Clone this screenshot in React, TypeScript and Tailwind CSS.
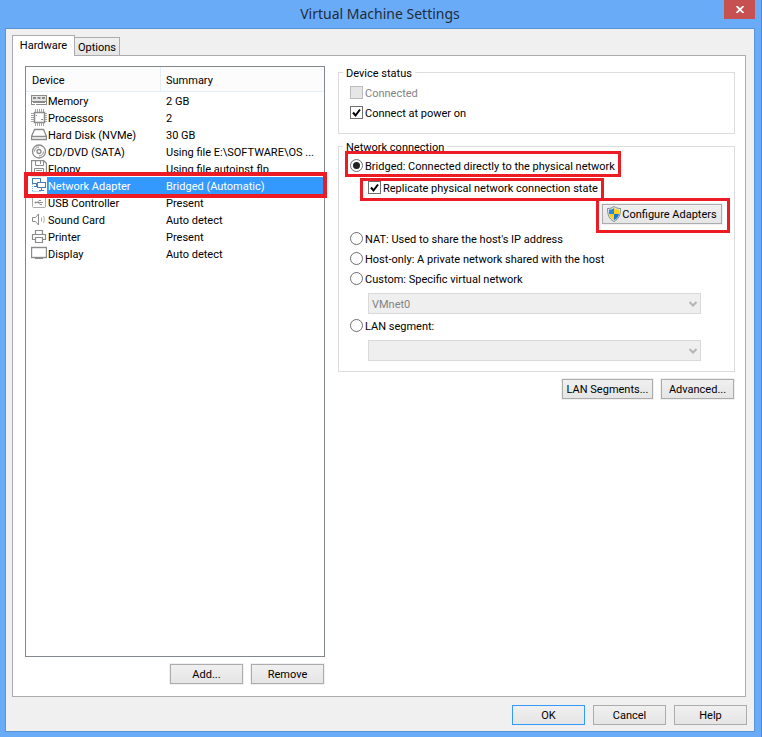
import React, { useState } from 'react';
import clsx from 'clsx';

interface Device {
  name: string;
  summary: string;
  icon: React.ReactNode;
}

const DEVICES: Device[] = [
  {
    name: 'Memory',
    summary: '2 GB',
    icon: (
      <>
        <rect x="0.5" y="3.5" width="15" height="6" fill="#e4e4e4" />
        <path d="M2 5h3v2H2zM6.500 5h3v2h-3zM11 5h3v2h-3z" fill="#888" stroke="none" />
        <path d="M0 12.500h4M5 12.500h11M0.500 9v3M15.500 9v3M2 10.500h12" />
      </>
    ),
  },
  {
    name: 'Processors',
    summary: '2',
    icon: (
      <>
        <rect x="3.5" y="3.5" width="10" height="10" strokeWidth="1.500" />
        <path d="M4.500 0v3M6.500 0v3M8.500 0v3M10.500 0v3M12.500 0v3M4.500 14v3M6.500 14v3M8.500 14v3M10.500 14v3M12.500 14v3M0 4.500h3M0 6.500h3M0 8.500h3M0 10.500h3M0 12.500h3M14 4.500h2M14 6.500h2M14 8.500h2M14 10.500h2M14 12.500h2" stroke="#a5a5a5" />
        <path d="M5 6.500h1M10 10.500h2" />
      </>
    ),
  },
  {
    name: 'Hard Disk (NVMe)',
    summary: '30 GB',
    icon: <path d="M3.500 3.500h9l3 7v3H0.500v-3zM0.500 10.500h15" strokeWidth="1.300" />,
  },
  {
    name: 'CD/DVD (SATA)',
    summary: 'Using file E:\\SOFTWARE\\OS ...',
    icon: (
      <>
        <circle cx="8" cy="8.500" r="6.500" strokeWidth="1.300" />
        <circle cx="8" cy="8.500" r="2" strokeWidth="1.300" />
        <path d="M3.500 8.500A4.500 4.500 0 0 1 8 4M12.500 8.500A4.500 4.500 0 0 1 8 13" />
      </>
    ),
  },
  {
    name: 'Floppy',
    summary: 'Using file autoinst.flp',
    icon: (
      <>
        <path d="M0.500 0.500h12l3 3v12H0.500z" strokeWidth="1.300" />
        <path d="M4.500 0.500v5h8v-5M9.500 1v3M3.500 15.500v-7h9v7M5 10.500h6M5 12.500h6" />
      </>
    ),
  },
  {
    name: 'Network Adapter',
    summary: 'Bridged (Automatic)',
    icon: (
      <>
        <path d="M1.500 7v7.500M1.500 14.500H10" stroke="#7cb4ee" strokeDasharray="1 1" />
        <rect x="1.500" y="1.500" width="8" height="5" fill="#fff" stroke="#4b7fb8" />
        <path d="M5.500 7v2M3 9.500h3" stroke="#4b7fb8" />
        <rect x="6.500" y="5.500" width="8" height="5" fill="#fff" stroke="#4b7fb8" />
        <path d="M10.500 11v2M8 13.500h5" stroke="#4b7fb8" />
      </>
    ),
  },
  {
    name: 'USB Controller',
    summary: 'Present',
    icon: (
      <>
        <rect x="1.500" y="2.500" width="13" height="11" rx="1" stroke="#aaa" />
        <path d="M4 8.500h8M6 8.500l2-2h2M7 8.500l2 2h2" />
        <circle cx="4.500" cy="8.500" r="1" fill="#8b8b8b" stroke="none" />
      </>
    ),
  },
  {
    name: 'Sound Card',
    summary: 'Auto detect',
    icon: (
      <>
        <path d="M1.500 6.500h3l3-3.500v11l-3-3.500h-3z" />
        <path d="M10.500 6.500v4M12.500 5c1 2 1 5 0 7" stroke="#aaa" />
      </>
    ),
  },
  {
    name: 'Printer',
    summary: 'Present',
    icon: (
      <path d="M4.500 6.500v-4h7v4M4.500 11.500h-3v-5h13v5h-3M4.500 9.500h7v5h-7z" strokeWidth="1.200" />
    ),
  },
  {
    name: 'Display',
    summary: 'Auto detect',
    icon: (
      <>
        <rect x="0.500" y="2.500" width="15" height="10" strokeWidth="1.400" />
        <path d="M4 13.500h8" />
      </>
    ),
  },
];

const NETWORK_MODES = [
  { id: 'nat', label: "NAT: Used to share the host's IP address" },
  { id: 'hostonly', label: 'Host-only: A private network shared with the host' },
  { id: 'custom', label: 'Custom: Specific virtual network' },
];

const Highlight = ({ className }: { className: string }) => (
  <span className={clsx('pointer-events-none absolute z-10 border-[#ed1c24]', className)} />
);

interface PushButtonProps {
  children: React.ReactNode;
  className?: string;
  primary?: boolean;
}

const PushButton = ({ children, className = 'w-[73px]', primary }: PushButtonProps) => (
  <button
    type="button"
    className={clsx(
      'flex h-5 shrink-0 items-center justify-center border bg-linear-to-b from-[#f0f0f0] to-[#e5e5e5] whitespace-nowrap',
      primary ? 'border-[#3399ff]' : 'border-[#acacac] shadow-[0_0_0_1px_#f0f0f0]',
      className
    )}
  >
    {children}
  </button>
);

interface CheckProps {
  label: string;
  defaultChecked?: boolean;
  disabled?: boolean;
}

const Check = ({ label, defaultChecked, disabled }: CheckProps) => (
  <label className={clsx('flex h-5 items-center gap-0.5', disabled && 'text-[#838383]')}>
    <span className="relative mb-px flex">
      <input
        type="checkbox"
        defaultChecked={defaultChecked}
        disabled={disabled}
        className="peer size-[13px] appearance-none border border-[#707070] bg-white disabled:border-[#bcbcbc] disabled:bg-[#e6e6e6]"
      />
      <svg viewBox="0 0 13 13" className="pointer-events-none absolute inset-0 hidden size-[13px] peer-checked:block">
        <path d="M3 6.500l2.500 3L10 3.500" fill="none" stroke="#000" strokeWidth="2" />
      </svg>
    </span>
    <span className="pt-0.5">{label}</span>
  </label>
);

interface RadioProps {
  label: string;
  checked: boolean;
  onChange: () => void;
}

const Radio = ({ label, checked, onChange }: RadioProps) => (
  <label className="flex h-5 items-center gap-0.5">
    <span className="relative mb-px flex">
      <input
        type="radio"
        name="network"
        checked={checked}
        onChange={onChange}
        className="peer size-[13px] appearance-none rounded-full border border-[#707070] bg-white"
      />
      <span className="pointer-events-none absolute inset-[3px] hidden rounded-full bg-[#222] peer-checked:block" />
    </span>
    <span className="pt-0.5">{label}</span>
  </label>
);

const DisabledSelect = ({ label, value }: { label: string; value: string }) => (
  <div className="relative mr-[33px] ml-[29px]">
    <select
      aria-label={label}
      disabled
      className="block h-[21px] w-full appearance-none border border-[#d9d9d9] bg-[#efefef] px-[3px] pt-0.5 text-[#838383] opacity-100"
    >
      <option>{value}</option>
    </select>
    <svg viewBox="0 0 8 6" className="pointer-events-none absolute top-2 right-1 h-1.5 w-2">
      <path d="M0.500 1L4 4.500 7.500 1" fill="none" stroke="#b5b5b5" strokeWidth="2" />
    </svg>
  </div>
);

const Shield = () => (
  <svg viewBox="0 0 14 16" className="h-4 w-3.5">
    <path d="M7 0.500C5 2 3 2.500 0.500 2.500c0 6 1.500 10.500 6.500 13 5-2.500 6.500-7 6.500-13C11 2.500 9 2 7 0.500z" fill="#e8eef2" stroke="#7d8b94" />
    <path d="M7 2C5.500 3 4 3.500 2 3.600V8h5z" fill="#2e86d8" />
    <path d="M7 2c1.500 1 3 1.500 5 1.600V8H7z" fill="#fbd21f" />
    <path d="M2 8h5v6.300C4 12.700 2.400 10.500 2 8z" fill="#fbd21f" />
    <path d="M12 8H7v6.300c3-1.600 4.600-3.800 5-6.300z" fill="#1f74cb" />
  </svg>
);

const DeviceTable = () => {
  const [selected, setSelected] = useState('Network Adapter');

  return (
    <div className="flex-1 border border-[#828790] bg-white">
      <table className="w-full table-fixed border-separate border-spacing-0 text-left">
        <thead>
          <tr className="h-[25px] bg-[#fcfcfc]">
            <th className="w-[135px] border-r border-b border-[#e3eefb] px-1.5 py-0 pt-1 font-normal">Device</th>
            <th className="border-b border-[#e3eefb] px-[5px] py-0 pt-1 font-normal">Summary</th>
          </tr>
        </thead>
        <tbody>
          {DEVICES.map((device) => {
            const isSelected = device.name === selected;
            return (
              <tr key={device.name} className="h-[17px]" onClick={() => setSelected(device.name)}>
                <td className="p-0">
                  <div className="relative flex pl-[5px]">
                    <svg viewBox="0 0 16 17" className="h-[17px] w-4 shrink-0" fill="none" stroke="#8b8b8b">
                      {device.icon}
                    </svg>
                    <span className={clsx('h-[17px] flex-1 pt-0.5 pl-px leading-[15px] whitespace-nowrap', isSelected && 'bg-[#3399ff] text-white')}>
                      {device.name}
                    </span>
                    {isSelected && <Highlight className="-top-[5px] -left-0.5 h-[26px] w-[303px] border-4" />}
                  </div>
                </td>
                <td className={clsx('truncate p-0 pt-0.5 pl-[5px] leading-[15px]', isSelected && 'bg-[#3399ff] text-white')}>
                  {device.summary}
                </td>
              </tr>
            );
          })}
        </tbody>
      </table>
    </div>
  );
};

const NetworkSettings = () => {
  const [mode, setMode] = useState('bridged');

  return (
    <div className="flex min-w-0 flex-1 flex-col">
      <fieldset className="relative mt-1.5 h-[62px] border border-[#dcdcdc] px-[11px] pt-2.5">
        <legend className="absolute -top-[7px] left-1 bg-white px-[3px] leading-4">Device status</legend>
        <Check label="Connected" disabled />
        <Check label="Connect at power on" defaultChecked />
      </fieldset>

      <fieldset className="relative mt-3 border border-[#dcdcdc] pt-[9px] pb-2.5">
        <legend className="absolute -top-[7px] left-1 bg-white px-[3px] leading-4">Network connection</legend>
        <div className="pl-[11px]">
          <div className="relative w-fit">
            <Radio
              label="Bridged: Connected directly to the physical network"
              checked={mode === 'bridged'}
              onChange={() => setMode('bridged')}
            />
            <Highlight className="-top-[5px] -right-1.5 -bottom-px -left-[5px] border-[3px]" />
          </div>
          <div className="relative mt-0.5 ml-[18px] w-fit">
            <Check label="Replicate physical network connection state" defaultChecked />
            <Highlight className="top-0 -right-1.5 -bottom-[3px] -left-2 border-[3px]" />
          </div>
        </div>
        <div className="mt-1.5 flex justify-end pr-3">
          <div className="relative">
            <PushButton className="w-[120px]">
              <Shield />
              <span className="pt-0.5 pl-px">Configure Adapters</span>
            </PushButton>
            <Highlight className="-top-1.5 -right-2 -bottom-[9px] -left-1.5 border-[3px]" />
          </div>
        </div>
        <div className="mt-[5px] pl-[11px]">
          {NETWORK_MODES.map((item) => (
            <Radio
              key={item.id}
              label={item.label}
              checked={mode === item.id}
              onChange={() => setMode(item.id)}
            />
          ))}
        </div>
        <div className="mt-1">
          <DisabledSelect label="Virtual network" value="VMnet0" />
        </div>
        <div className="mt-0.5 mb-1 pl-[11px]">
          <Radio label="LAN segment:" checked={mode === 'lan'} onChange={() => setMode('lan')} />
        </div>
        <DisabledSelect label="LAN segment name" value="" />
      </fieldset>

      <div className="mt-[7px] flex justify-end gap-2 pr-px">
        <PushButton className="w-[91px] pt-0.5">LAN Segments...</PushButton>
        <PushButton className="w-[73px] pt-0.5">Advanced...</PushButton>
      </div>
    </div>
  );
};

export default function App() {
  return (
    <div className="flex min-h-screen flex-col border-r border-[#4a85cd] bg-[#6aabf7] pr-1.5 pb-[5px] pl-[5px] font-[Roboto,sans-serif] text-[11px] leading-4 text-black">
      <header className="relative flex h-7 items-center justify-center">
        <h1 className="font-['Noto_Sans',sans-serif] text-[14px] text-[#1f2b3a]">Virtual Machine Settings</h1>
        <button type="button" aria-label="Close" className="absolute top-0 right-0 flex h-[19px] w-[31px] items-center justify-center bg-[#c75050]">
          <svg viewBox="0 0 8 7" className="h-[7px] w-2">
            <path d="M0.500 0l7 7M7.500 0l-7 7" stroke="#fff" strokeWidth="1.800" />
          </svg>
        </button>
      </header>

      <main className="flex flex-1 flex-col border border-[#5b94d6] bg-[#f0f0f0] px-1.5 pt-1.5 pb-1.5">
        <div className="flex items-end" role="tablist">
          <button type="button" role="tab" aria-selected="true" className="relative z-10 -mb-px h-[21px] w-[63px] border border-b-0 border-[#acacac] bg-white">
            Hardware
          </button>
          <button type="button" role="tab" aria-selected="false" className="h-[18px] w-[45px] border border-b-0 border-l-0 border-[#acacac] bg-linear-to-b from-[#f0f0f0] to-[#e5e5e5] pt-0.5">
            Options
          </button>
        </div>

        <section className="mr-0.5 flex flex-1 gap-[13px] border border-[#acacac] bg-white pt-2.5 pr-2.5 pb-3 pl-3">
          <div className="flex w-[300px] shrink-0 flex-col">
            <DeviceTable />
            <div className="mt-[7px] flex justify-end gap-2 pr-px">
              <PushButton className="w-[73px] pt-0.5">Add...</PushButton>
              <PushButton className="w-[73px] pt-0.5">Remove</PushButton>
            </div>
          </div>
          <NetworkSettings />
        </section>

        <footer className="mt-2 flex justify-end gap-2 pr-px">
          <PushButton className="w-[73px] pt-0.5" primary>OK</PushButton>
          <PushButton className="w-[73px] pt-0.5">Cancel</PushButton>
          <PushButton className="w-[73px] pt-0.5">Help</PushButton>
        </footer>
      </main>
    </div>
  );
}
